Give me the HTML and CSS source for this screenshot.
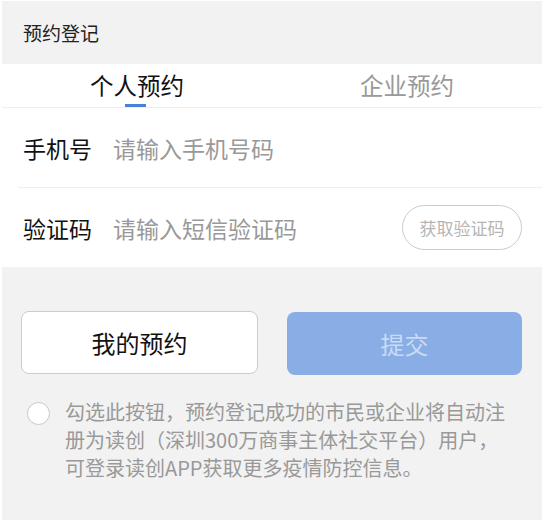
FILE: index.html
```html
<!DOCTYPE html>
<html lang="zh-CN">
<head>
<meta charset="utf-8">
<title>预约登记</title>
<link rel="stylesheet" href="styles.css">
</head>
<body>
<div class="page">
  <div class="header">预约登记</div>
  <div class="tabs">
    <div class="tab active">个人预约</div>
    <div class="tab">企业预约</div>
  </div>
  <div class="form">
    <div class="row">
      <span class="label">手机号</span>
      <span class="placeholder">请输入手机号码</span>
    </div>
    <div class="row last">
      <span class="label">验证码</span>
      <span class="placeholder">请输入短信验证码</span>
      <span class="code-btn">获取验证码</span>
    </div>
  </div>
  <div class="actions">
    <div class="btn btn-outline">我的预约</div>
    <div class="btn btn-primary">提交</div>
  </div>
  <div class="agree">
    <span class="radio"></span>
    <p class="agree-text">勾选此按钮，预约登记成功的市民或企业将自动注册为读创（深圳300万商事主体社交平台）用户，可登录读创APP获取更多疫情防控信息。</p>
  </div>
</div>
</body>
</html>
```

FILE: styles.css
```css
* { box-sizing: border-box; }
html, body { margin: 0; padding: 0; background: #fff; }
body {
  font-family: "Noto Sans CJK SC", "Noto Sans", sans-serif;
  color: #222;
}
.page {
  margin: 1px 0 0 2px;
  height: 519px;
  background: #f2f2f2;
}
.header {
  height: 63px;
  padding: 19px 0 0 21px;
  font-size: 19px;
  line-height: 26px;
  color: #222;
}
.tabs {
  display: flex;
  height: 44px;
  background: #fff;
  border-bottom: 1px solid #eeeeee;
}
.tab {
  flex: 1;
  position: relative;
  text-align: center;
  font-size: 23.5px;
  line-height: 30px;
  padding-top: 6px;
  color: #999;
}
.tab.active { color: #111; }
.tab.active::after {
  content: "";
  position: absolute;
  left: 50%;
  bottom: 0;
  width: 21px;
  height: 3px;
  margin-left: -12px;
  background: #4a80d8;
}
.form {
  background: #fff;
  padding-left: 16px;
}
.row {
  display: flex;
  align-items: center;
  height: 80px;
  border-bottom: 1px solid #eeeeee;
  padding-left: 5px;
  padding-right: 20px;
}
.row.last { border-bottom: none; height: 79px; }
.label {
  font-size: 23px;
  color: #111;
  width: 90px;
}
.placeholder {
  flex: 1;
  font-size: 23px;
  color: #999;
}
.code-btn {
  width: 120px;
  height: 45px;
  border: 1px solid #cccccc;
  border-radius: 23px;
  display: flex;
  align-items: center;
  justify-content: center;
  font-size: 17px;
  color: #b5b5b5;
}
.actions {
  display: flex;
  gap: 29px;
  padding: 44px 20px 0 19px;
}
.btn {
  flex: 1;
  height: 63px;
  border-radius: 8px;
  display: flex;
  align-items: center;
  justify-content: center;
  font-size: 24px;
}
.btn-outline {
  background: #fff;
  border: 1px solid #cccccc;
  color: #111;
}
.btn-primary {
  background: #89aee6;
  color: #c9daf4;
  margin-top: 1px;
}
.agree {
  display: flex;
  align-items: flex-start;
  padding: 27px 30px 0 25px;
}
.radio {
  flex: none;
  width: 23px;
  height: 23px;
  border: 1px solid #c8c8c8;
  border-radius: 50%;
  background: #fff;
  margin-top: 0;
}
.agree-text {
  margin: -4px 0 0 15px;
  font-size: 20px;
  line-height: 28px;
  color: #999;
}
```
